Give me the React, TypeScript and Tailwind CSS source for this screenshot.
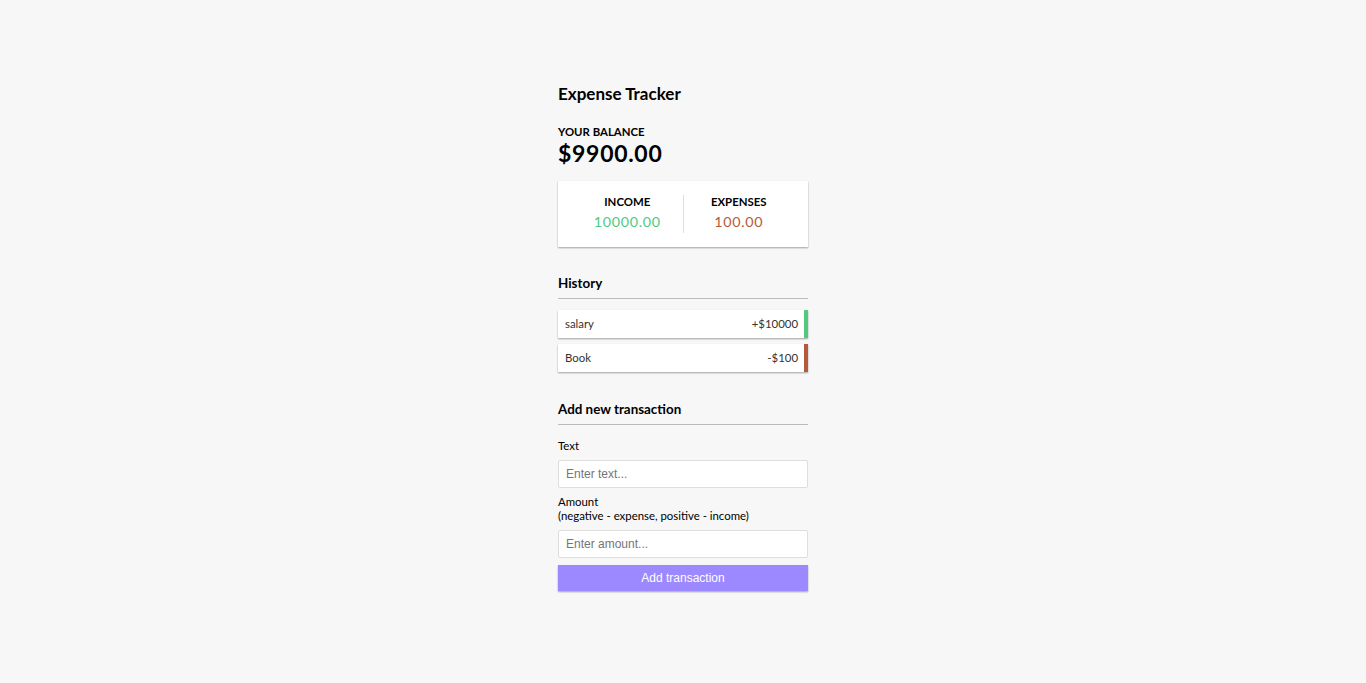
import * as React from "react"

const transactions = [
  { id: 1, text: "salary", amount: 10000 },
  { id: 2, text: "Book", amount: -100 },
]

const shadow = "shadow-[0_1px_2px_rgba(0,0,0,0.12),0_1px_1.5px_rgba(0,0,0,0.24)]"

export default function App() {
  const [text, setText] = React.useState("")
  const [amount, setAmount] = React.useState("")

  const amounts = transactions.map((t) => t.amount)
  const total = amounts.reduce((a, b) => a + b, 0).toFixed(2)
  const income = amounts.filter((a) => a > 0).reduce((a, b) => a + b, 0).toFixed(2)
  const expense = (amounts.filter((a) => a < 0).reduce((a, b) => a + b, 0) * -1).toFixed(2)

  return (
    <div className="min-h-screen bg-[#f7f7f7] flex justify-center text-black font-['Lato','Noto_Sans',sans-serif]">
      <div className="w-[250px] pt-[84px] flex flex-col">
        {/* Header */}
        <h2 className="text-[17px] leading-[20px] font-bold">Expense Tracker</h2>

        {/* Balance */}
        <h4 className="mt-[21px] text-[11.4px] leading-[14px] font-bold uppercase">Your Balance</h4>
        <h1 className="text-[23px] leading-[28px] font-bold tracking-[0.7px]">${total}</h1>

        {/* Income / Expense */}
        <div className={`mt-[14px] bg-white ${shadow} p-[14px] flex`}>
          <div className="flex-1 text-center border-r border-[#dedede]">
            <h4 className="text-[11.4px] leading-[14px] font-bold uppercase">Income</h4>
            <p className="my-[3.5px] text-[14.3px] leading-[17px] tracking-[0.7px] text-[#4fca7f]">{income}</p>
          </div>
          <div className="flex-1 text-center">
            <h4 className="text-[11.4px] leading-[14px] font-bold uppercase">Expenses</h4>
            <p className="my-[3.5px] text-[14.3px] leading-[17px] tracking-[0.7px] text-[#b55a3a]">{expense}</p>
          </div>
        </div>

        {/* History */}
        <h3 className="mt-[28px] text-[13.4px] leading-[16px] font-bold pb-[7px] border-b border-[#bbb]">History</h3>
        <ul className="mt-[11px] flex flex-col gap-[6px]">
          {transactions.map((t) => (
            <li
              key={t.id}
              className={`bg-white ${shadow} text-[#333] flex justify-between p-[7px] pr-[6px] text-[11.4px] leading-[14px] border-r-[4px] ${
                t.amount < 0 ? "border-[#b55a3a]" : "border-[#4fca7f]"
              }`}
            >
              {t.text}
              <span>
                {t.amount < 0 ? "-" : "+"}${Math.abs(t.amount)}
              </span>
            </li>
          ))}
        </ul>

        {/* Add form */}
        <h3 className="mt-[29px] text-[13.4px] leading-[16px] font-bold pb-[7px] border-b border-[#bbb]">Add new transaction</h3>
        <form className="flex flex-col" onSubmit={(e) => e.preventDefault()}>
          <label className="mt-[14px] mb-[7px] text-[11.4px] leading-[14px]">Text</label>
          <input
            type="text"
            value={text}
            onChange={(e) => setText(e.target.value)}
            placeholder="Enter text..."
            className="block w-full bg-white border border-[#dedede] rounded-[2px] px-[7px] h-[28px] text-[12px] font-['Liberation_Sans',Arial,sans-serif] placeholder:text-[#757575] outline-none"
          />
          <label className="mt-[7px] mb-[7px] text-[11.4px] leading-[14px]">
            Amount <br />
            (negative - expense, positive - income)
          </label>
          <input
            type="number"
            value={amount}
            onChange={(e) => setAmount(e.target.value)}
            placeholder="Enter amount..."
            className="block w-full bg-white border border-[#dedede] rounded-[2px] px-[7px] h-[28px] text-[12px] font-['Liberation_Sans',Arial,sans-serif] placeholder:text-[#757575] outline-none"
          />
          <button
            className={`mt-[7px] mb-[21px] w-full h-[26px] bg-[#9c88ff] ${shadow} text-white text-[12px] font-['Liberation_Sans',Arial,sans-serif] cursor-pointer`}
          >
            Add transaction
          </button>
        </form>
      </div>
    </div>
  )
}
